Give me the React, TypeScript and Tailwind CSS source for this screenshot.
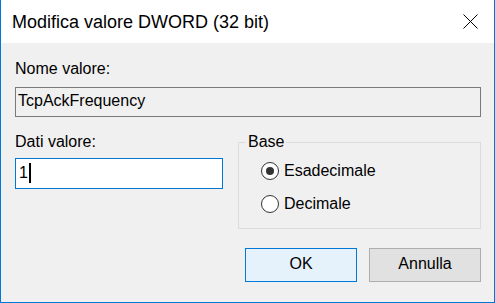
export default function App() {
  return (
    <div
      className="w-[495px] h-[303px] flex flex-col border-x border-b border-[#0078d7] bg-[#f0f0f0] text-black"
      style={{ fontFamily: '"Liberation Sans", Arial, sans-serif' }}
    >
      {/* title bar */}
      <div className="h-[43px] shrink-0 bg-white flex items-center justify-between pl-[11px] pr-[16px]">
        <span className="text-[18px] leading-[22px]">Modifica valore DWORD (32 bit)</span>
        <svg width="15" height="15" viewBox="0 0 15 15">
          <path d="M0.5 0.5L14.5 14.5M14.5 0.5L0.5 14.5" stroke="#000" strokeWidth="1" />
        </svg>
      </div>

      {/* body */}
      <div className="flex-1 flex flex-col pl-[14px] pr-[13px] pt-[17px] text-[16px]">
        <div className="leading-[18px] h-[18px]">Nome valore:</div>
        <div className="mt-[9px] h-[30px] border border-[#7a7a7a] flex items-center pl-[2px] pb-[3px]">
          TcpAckFrequency
        </div>

        <div className="mt-[16px] flex justify-between">
          <div className="flex flex-col w-[208px]">
            <div className="leading-[18px] h-[18px]">Dati valore:</div>
            <div className="mt-[7px] h-[31px] border border-[#0078d7] bg-white flex items-center pl-[3px] pb-[1px]">
              <span>1</span>
              <span className="ml-[1px] w-[2px] h-[20px] bg-black" />
            </div>
          </div>

          <fieldset className="w-[243px] h-[96px] border border-[#dcdcdc] pl-[22px] pt-[8px]">
            <legend className="-ml-[15px] px-[2px] leading-[18px]">Base</legend>
            <div className="flex flex-col gap-[9px]">
              <div className="h-[24px] flex items-center">
                <span className="w-[18px] h-[18px] rounded-full border border-[#333] bg-white flex items-center justify-center">
                  <span className="w-[8px] h-[8px] rounded-full bg-[#333]" />
                </span>
                <span className="ml-[5px]">Esadecimale</span>
              </div>
              <div className="h-[24px] flex items-center">
                <span className="w-[18px] h-[18px] rounded-full border border-[#333] bg-white" />
                <span className="ml-[5px]">Decimale</span>
              </div>
            </div>
          </fieldset>
        </div>

        <div className="mt-[19px] flex justify-end gap-[12px]">
          <button className="w-[112px] h-[34px] border border-[#0078d7] bg-[#e5f1fb] pb-[2px]">OK</button>
          <button className="w-[112px] h-[34px] border border-[#adadad] bg-[#e1e1e1] pb-[2px]">Annulla</button>
        </div>
      </div>
    </div>
  )
}
